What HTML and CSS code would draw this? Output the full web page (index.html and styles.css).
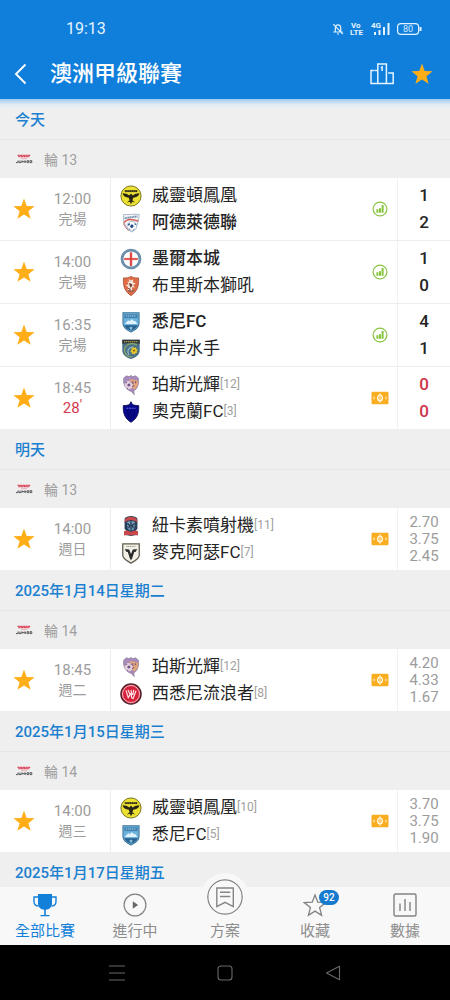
FILE: index.html
```html
<!DOCTYPE html>
<html lang="zh-Hant">
<head>
<meta charset="utf-8">
<meta name="viewport" content="width=device-width, initial-scale=1">
<title>澳洲甲級聯賽</title>
<link rel="stylesheet" href="styles.css">
</head>
<body>
<svg class="sprite" aria-hidden="true">
  <symbol id="star" viewBox="0 0 24 24"><path d="M12 1.600l2.700 7.400 7.900.3-6.200 4.900 2.200 7.600-6.600-4.400-6.600 4.400 2.200-7.600-6.200-4.900 7.900-.3z" fill="#ffae17"/></symbol>
  <symbol id="stats" viewBox="0 0 16 16"><circle cx="8" cy="8" r="6.900" fill="none" stroke="#8ac441" stroke-width="1.200"/><path d="M4.400 8.300h2v3.500h-2zM7 7.200h2v4.600H7zM9.600 4h2v7.800h-2z" fill="#85c43a"/></symbol>
  <symbol id="ticket" viewBox="0 0 18 14"><rect x=".5" y=".7" width="17" height="12.600" rx="1.300" fill="#f9ae22"/><ellipse cx="9" cy="7" rx="2.300" ry="3" fill="none" stroke="#fff" stroke-width="1.200"/><path d="M9 2.200v9.600" stroke="#fff3d4" stroke-width="1"/><path d="M3.200 5.800L2.600 7l.6 1.200zM14.800 5.800l.6 1.200-.6 1.200z" fill="#fff" stroke="#fff" stroke-width=".4"/></symbol>
  <symbol id="league" viewBox="0 0 18 10"><path d="M2.500 1.300h13M3.400 2.700h11" stroke="#dc4c61" stroke-width="1.300" stroke-dasharray="2.300 .3"/><path d="M6 4.700h6" stroke="#e3a0a8" stroke-width=".8"/><path d="M1 8.600h2V6.600M4 6.600v2h2v-2M7 8.700V6.800l1.200 1 1.100-1v1.900M10.500 6.700v2M12 8.600V6.700h1.700v1.900zM15 8.600V6.700h1.800v1.900z" fill="none" stroke="#4c4c50" stroke-width=".9"/></symbol>

  <symbol id="phoenix" viewBox="0 0 24 24"><circle cx="12" cy="12" r="11" fill="#ece033" stroke="#6f6a16" stroke-width="1"/><path d="M5.200 5.600h13.600v2.100H5.200z" fill="#2c2a17"/><path d="M6 6.600h12" stroke="#d8cc39" stroke-width=".7" stroke-dasharray="1 1"/><path d="M2.800 9c2.700.2 5.600.6 7.300 2.400L12 9.200l1.900 2.200C15.600 9.600 18.500 9.200 21.200 9c-.7 3.300-3.300 4.400-6.700 5l-1 2.500 3 2.700-3.200-1L12 21l-1.300-2.800-3.200 1 3-2.700-1-2.500C6.100 13.400 3.500 12.300 2.800 9z" fill="#292714"/></symbol>
  <symbol id="adelaide" viewBox="0 0 24 24"><path d="M4 2.600c5 .8 11-.9 17 .2-.7 6.300-.8 12-8 19.200C5.500 16.700 2.800 11 4 2.600z" fill="#f4f5f8" stroke="#8fa3bb" stroke-width=".8"/><path d="M5 6.800l14-2" stroke="#7890ad" stroke-width="2.200" stroke-dasharray="1.400 .5"/><path d="M4.200 12c2.500-4.300 9-4.600 15.600-2.200" fill="none" stroke="#d66057" stroke-width="1.600"/><circle cx="13" cy="15.500" r="5.200" fill="#fff" stroke="#87a1bd" stroke-width=".7"/><path d="M12 13.700l2.300.3.500 2.200-2 1.500-1.900-1.500zM8.500 14l1.500-2 1 1.200-1.200 2zM16 11.700l1.800 1.800-1.600.7zM14.500 19l2-.9-2.300 2.300zM9.200 17.800l1.800.8.400 1.600z" fill="#244987"/><path d="M3.800 12.500c1.500 3.500 3 5.700 5.700 7.800" fill="none" stroke="#c35c59"/></symbol>
  <symbol id="city" viewBox="0 0 24 24"><circle cx="12" cy="12" r="9.800" fill="#fff" stroke="#6387a6" stroke-width="3"/><circle cx="12" cy="12" r="9.900" fill="none" stroke="#a6bccd" stroke-width=".8" stroke-dasharray="1 1.300"/><path d="M5 10.600h5.200V5h3.600v5.600H19v2.800h-5.200V19h-3.600v-5.600H5z" fill="#f3c7c5"/><path d="M12 4.500v15M4.500 12h15" stroke="#dc3a35" stroke-width="1.900"/></symbol>
  <symbol id="roar" viewBox="0 0 24 24"><path d="M12 1.500c2.500 1.500 5 1.800 8.200 1.700.6 9-1.200 14.500-8.200 19.300C5 17.700 3.200 12.200 3.800 3.200 7 3.300 9.500 3 12 1.500z" fill="#de6d47" stroke="#a95137" stroke-width=".9"/><path d="M9.500 4l2 2 3-1-.7 3 3.400 1.300-2.800 1.500 1.600 3.200-2.600-.8-.4 4.800-2-3-3 2.400.9-4.400L6 11l3.500-.7L8 7l2.200.6z" fill="#f6e8df"/><path d="M10.500 9.300l2.700 1.300-1.600 2.700zM8.500 14.500l3 1" stroke="#6f3b32" stroke-width="1" fill="#6f3b32"/><path d="M8.500 17c2.400 1 4.700 1 7-.2" stroke="#5d5360" fill="none"/></symbol>
  <symbol id="sydney" viewBox="0 0 24 24"><path d="M3.200 2h17.600v11.500c0 4.700-4 7-8.800 9.500-4.800-2.500-8.800-4.800-8.800-9.500z" fill="#6db2dc" stroke="#3d7499" stroke-width="1.100"/><path d="M4.700 3.500h14.600v4.300H4.700z" fill="#4484b1"/><path d="M6.500 5.400h11" stroke="#abd1e8" stroke-dasharray="1.400 .8"/><path d="M5 14.200c1.800-1.400 2.600-3.400 4.500-4.200l1.300 1.300L13 8.700l2.200 2.600 1.200-.6 2.700 3.500z" fill="#e0f3fb"/><path d="M4.500 15.500h15c-1.500 3-4 4.500-7.500 6-3.500-1.500-6-3-7.500-6z" fill="#28618c"/><path d="M12 16.500l1 1.500h1.500l-1.200 1.200L12 21l-1.300-1.800L9.500 18H11z" fill="#8bc4e1"/></symbol>
  <symbol id="mariners" viewBox="0 0 24 24"><path d="M2.500 2h19v12c-.3 5-4.500 7.500-9.500 9-5-1.500-9.200-4-9.500-9z" fill="#49728a"/><path d="M2.500 1.800h19v4.400c-6-1-13-1-19 0z" fill="#30353a"/><path d="M4.500 4h15" stroke="#c1ad4d" stroke-width="1.200" stroke-dasharray="1.300 .9"/><path d="M18.500 7.500C11 4 4.800 8 5 14c.2 4.500 4.500 7 8.500 6.500" fill="none" stroke="#91a767" stroke-width="1.300"/><path d="M10 18.500c-3.500-4 0-9 4-8.500" fill="none" stroke="#94bcc9" stroke-width="1.200"/><path d="M14.700 9l1 1.800 2-.8-.1 2.100 2.100.6-1.600 1.500 1 1.900-2.100.1-.7 2.100-1.600-1.400-2 .8.200-2.200-1.900-.9 1.700-1.300-.5-2.100 2 .1z" fill="#f0cb25"/><circle cx="15.300" cy="13.700" r="1.200" fill="#7c6723"/></symbol>
  <symbol id="perth" viewBox="0 0 24 24"><path d="M4 4.500L7 2l3 1 2-1.500L14 3l3-1 3 2.500c.6 5 .2 9-3 12.500l-2 1.500.5 4-3-3.500C7.500 17.500 3 13.500 4 4.500z" fill="#a68bbb" stroke="#857194" stroke-width=".7"/><path d="M10.500 5.500L19.500 7v5.500L16 17l-5-3.500z" fill="#e1a477"/><circle cx="9.500" cy="12" r="4.500" fill="#e3cfdb"/><path d="M8.700 10.500l2.200.2.500 2-2 1-1.500-1.200zM5.500 10l1.300-1.700 1 1.400zM11.500 8l1.500 1.300-1.200.7zM7 15.300l1.500-.3.500 1.500z" fill="#705486"/><path d="M14 8v3M17 8v2M13.500 14l1.500-2" stroke="#7d567d" stroke-width="1.200"/></symbol>
  <symbol id="auckland" viewBox="0 0 24 24"><path d="M12 .8l1.400 2.700c2 1.300 4.300 1.400 7 1.500C20.800 13 19 19 12 23.200 5 19 3.200 13 3.600 5c2.700-.1 5-.2 7-1.500z" fill="#08088d" stroke="#05054d" stroke-width=".9"/><path d="M7 8h10" stroke="#6870cb" stroke-width="1.100" stroke-dasharray="2 .9"/><path d="M12 10.500V21M8.300 10.500l1.200 7.700M15.700 10.500l-1.200 7.700" stroke="#040460" stroke-width="1.200"/></symbol>
  <symbol id="jets" viewBox="0 0 24 24"><path d="M5 4c1-2 4-3 7-3s6 1 7 3v11l-2 2.500h2.300v4L12 23l-7.300-1.500v-4H7L5 15z" fill="#263f5b"/><path d="M5.200 6C6 .5 18 .5 18.800 6v2C16 5 8 5 5.200 8z" fill="#c8474b"/><path d="M7.500 8c3-2 6-2 9 0l-1 7-3.500 3-3.500-3z" fill="#7fa5c2"/><path d="M12 5.500v12M8 9l2.500 2.500-1 3M16 9l-2.500 2.500 1 3" fill="none" stroke="#263c56" stroke-width="1.500"/><path d="M4.500 17.500l3.500-.5 4 1.500 4-1.500 3.500.5v4.800l-4.500-.8-3 .8-3-.8-4.500.8z" fill="#cf4649"/></symbol>
  <symbol id="macarthur" viewBox="0 0 24 24"><path d="M3 2h18v12.500c0 4-4.500 6-9 8.500-4.500-2.500-9-4.500-9-8.500z" fill="#f2f0e7" stroke="#605d4e" stroke-width="1.400"/><path d="M7 4.800h10" stroke="#8d8870" stroke-width="1" stroke-dasharray="1.300 .6"/><path d="M5.300 7.700l4.700.5 2 4.800 2-4.800 4.700-.5-1.500 2.800-1.700.4-2.300 7.100L12 20l-1.200-2-2.300-7.100-1.700-.4z" fill="#292b29"/></symbol>
  <symbol id="wanderers" viewBox="0 0 24 24"><circle cx="12" cy="12" r="11" fill="#d7213b" stroke="#4b2029" stroke-width="1.500"/><circle cx="12" cy="12" r="9.300" fill="none" stroke="#f6dbe0" stroke-width=".9"/><path d="M6.500 8l2.500 8 3-5 .7 5 1.500 1 3.300-8.500M8.700 7.500l2 4.500M12 7.500l1 5.500M15 7.500L14 13" fill="none" stroke="#fbe5e8" stroke-width="1.300"/></symbol>
</svg>

<div class="app">
  <header class="header">
    <div class="status">
      <time class="clock">19:13</time>
      <svg class="status-icons" viewBox="0 0 90 16" role="img" aria-label="靜音, VoLTE, 4G, 電量 80">
        <g fill="none" stroke="#e3f3ff" stroke-width="1.200"><path d="M3.300 10.800V7.200a2.700 3.400 0 0 1 5.400 0v3.600M1.300 11h9.400M5 13h2M1.300 3.200l9.600 10"/><rect x="65.600" y="2.700" width="21" height="10.600" rx="3.300"/><path d="M88.500 6v4" stroke-width="2"/></g>
        <path d="M42 11h2v3h-2zM46.500 9h2v5h-2zM51 6h2v8h-2zM55.500 2h2v12h-2z" fill="#e3f3ff"/>
        <g class="status-text"><text x="19" y="7">Vo</text><text x="18" y="14">LTE</text><text x="39" y="7">4G</text></g>
        <text class="battery-text" x="71" y="11">80</text>
      </svg>
    </div>
    <div class="titlebar">
      <button class="icon-button back" aria-label="返回"><svg viewBox="0 0 14 22"><path d="M11.500 1.500L2 11l9.500 9.500" fill="none" stroke="#fff" stroke-width="1.900"/></svg></button>
      <h1>澳洲甲級聯賽</h1>
      <button class="icon-button podium" aria-label="排名"><svg viewBox="0 0 24 22"><path d="M7.800 20.500V1h8.600v19.500M7.800 7.600H5M4.500 7.600H1v12.900h22.200V10h-5M12.100 8V4l-1.200.8" fill="none" stroke="#e3f4ff" stroke-width="1.500"/></svg></button>
      <button class="icon-button favorite" aria-label="收藏聯賽"><svg viewBox="0 0 24 24"><use href="#star"/></svg></button>
    </div>
  </header>

  <main class="list">
    <section>
      <h2 class="date">今天</h2>
      <h3 class="round"><svg><use href="#league"/></svg>輪 13</h3>
      <ul class="matches">
        <li class="match">
          <button class="star" aria-label="收藏"><svg><use href="#star"/></svg></button>
          <div class="when"><span>12:00</span><span class="state">完場</span></div>
          <div class="teams"><div class="team"><svg><use href="#phoenix"/></svg><span>威靈頓鳳凰</span></div><div class="team winner"><svg><use href="#adelaide"/></svg><span>阿德萊德聯</span></div></div>
          <svg class="info stats"><use href="#stats"/></svg>
          <div class="score"><span>1</span><span>2</span></div>
        </li>
        <li class="match">
          <button class="star" aria-label="收藏"><svg><use href="#star"/></svg></button>
          <div class="when"><span>14:00</span><span class="state">完場</span></div>
          <div class="teams"><div class="team winner"><svg><use href="#city"/></svg><span>墨爾本城</span></div><div class="team"><svg><use href="#roar"/></svg><span>布里斯本獅吼</span></div></div>
          <svg class="info stats"><use href="#stats"/></svg>
          <div class="score"><span>1</span><span>0</span></div>
        </li>
        <li class="match">
          <button class="star" aria-label="收藏"><svg><use href="#star"/></svg></button>
          <div class="when"><span>16:35</span><span class="state">完場</span></div>
          <div class="teams"><div class="team winner"><svg><use href="#sydney"/></svg><span>悉尼FC</span></div><div class="team"><svg><use href="#mariners"/></svg><span>中岸水手</span></div></div>
          <svg class="info stats"><use href="#stats"/></svg>
          <div class="score"><span>4</span><span>1</span></div>
        </li>
        <li class="match live">
          <button class="star" aria-label="收藏"><svg><use href="#star"/></svg></button>
          <div class="when"><span>18:45</span><span class="minute">28<sup>'</sup></span></div>
          <div class="teams"><div class="team"><svg><use href="#perth"/></svg><span>珀斯光輝</span><small>[12]</small></div><div class="team"><svg><use href="#auckland"/></svg><span>奧克蘭FC</span><small>[3]</small></div></div>
          <svg class="info ticket"><use href="#ticket"/></svg>
          <div class="score"><span>0</span><span>0</span></div>
        </li>
      </ul>
    </section>
    <section>
      <h2 class="date">明天</h2>
      <h3 class="round"><svg><use href="#league"/></svg>輪 13</h3>
      <ul class="matches">
        <li class="match">
          <button class="star" aria-label="收藏"><svg><use href="#star"/></svg></button>
          <div class="when"><span>14:00</span><span class="state">週日</span></div>
          <div class="teams"><div class="team"><svg><use href="#jets"/></svg><span>紐卡素噴射機</span><small>[11]</small></div><div class="team"><svg><use href="#macarthur"/></svg><span>麥克阿瑟FC</span><small>[7]</small></div></div>
          <svg class="info ticket"><use href="#ticket"/></svg>
          <div class="odds"><span>2.70</span><span>3.75</span><span>2.45</span></div>
        </li>
      </ul>
    </section>
    <section>
      <h2 class="date">2025年1月14日星期二</h2>
      <h3 class="round"><svg><use href="#league"/></svg>輪 14</h3>
      <ul class="matches">
        <li class="match">
          <button class="star" aria-label="收藏"><svg><use href="#star"/></svg></button>
          <div class="when"><span>18:45</span><span class="state">週二</span></div>
          <div class="teams"><div class="team"><svg><use href="#perth"/></svg><span>珀斯光輝</span><small>[12]</small></div><div class="team"><svg><use href="#wanderers"/></svg><span>西悉尼流浪者</span><small>[8]</small></div></div>
          <svg class="info ticket"><use href="#ticket"/></svg>
          <div class="odds"><span>4.20</span><span>4.33</span><span>1.67</span></div>
        </li>
      </ul>
    </section>
    <section>
      <h2 class="date">2025年1月15日星期三</h2>
      <h3 class="round"><svg><use href="#league"/></svg>輪 14</h3>
      <ul class="matches">
        <li class="match">
          <button class="star" aria-label="收藏"><svg><use href="#star"/></svg></button>
          <div class="when"><span>14:00</span><span class="state">週三</span></div>
          <div class="teams"><div class="team"><svg><use href="#phoenix"/></svg><span>威靈頓鳳凰</span><small>[10]</small></div><div class="team"><svg><use href="#sydney"/></svg><span>悉尼FC</span><small>[5]</small></div></div>
          <svg class="info ticket"><use href="#ticket"/></svg>
          <div class="odds"><span>3.70</span><span>3.75</span><span>1.90</span></div>
        </li>
      </ul>
    </section>
    <section>
      <h2 class="date">2025年1月17日星期五</h2>
    </section>
  </main>

  <nav class="tabs" aria-label="主選單">
    <a class="tab active" href="#all"><svg viewBox="0 0 24 24"><path d="M5 1h14v9.500c0 3.700-3 6-6.200 6.300V22h3.700v1.300h-9V22h3.700v-5.200C8 16.500 5 14.200 5 10.500z" fill="#127fd9"/><path d="M5 4H1v4.500C1 11.500 3 13 5.500 13M19 4h4v4.500c0 3-2 4.500-4.500 4.500" fill="none" stroke="#127fd9" stroke-width="1.400"/></svg><span>全部比賽</span></a>
    <a class="tab" href="#live"><svg viewBox="0 0 24 24"><circle cx="12" cy="12" r="10.900" fill="none" stroke="#828282" stroke-width="1.200"/><path d="M9.800 8.300l5.300 3.700-5.300 3.700z" fill="#686868"/></svg><span>進行中</span></a>
    <a class="tab center" href="#plans"><svg viewBox="0 0 36 36"><circle cx="18" cy="18" r="17.200" fill="none" stroke="#858585" stroke-width="1.300"/><path d="M9.800 9h16.500v18.500L18 23.300l-8.200 4.200zM13 13.300h10.200M13 17.500h10.200" fill="none" stroke="#858585" stroke-width="1.400"/></svg><span>方案</span></a>
    <a class="tab" href="#favorites"><svg viewBox="0 0 24 24"><path d="M12 2l2.800 7.200 8 .4-6.200 5 2 7.800-6.600-4.300-6.600 4.300 2-7.800-6.200-5 8-.4z" fill="none" stroke="#828282" stroke-width="1.300"/></svg><span>收藏</span><b class="badge">92</b></a>
    <a class="tab" href="#data"><svg viewBox="0 0 24 24"><rect x="1" y="1" width="22" height="22" rx="1.500" fill="none" stroke="#828282" stroke-width="1.400"/><path d="M7 18v-7.500M12 18V6M17 18V9" stroke="#828282" stroke-width="1.400"/></svg><span>數據</span></a>
  </nav>

  <div class="system">
    <button aria-label="最近使用"><svg viewBox="0 0 18 18"><path d="M1 2h16M1 9h16M1 16h16" stroke="#686868" stroke-width="1.100"/></svg></button>
    <button aria-label="主畫面"><svg viewBox="0 0 18 18"><rect x="2" y="2" width="14" height="14" rx="3" fill="none" stroke="#686868" stroke-width="1.100"/></svg></button>
    <button aria-label="返回"><svg viewBox="0 0 18 18"><path d="M15.500 2.300v13.400L2.500 9z" fill="none" stroke="#686868" stroke-width="1.100" stroke-linejoin="round"/></svg></button>
  </div>
</div>
</body>
</html>
```
FILE: styles.css
```css
* { box-sizing: border-box; }

body {
  margin: 0;
  background: #efefef;
  color: #242424;
  font-family: Roboto, "Noto Sans CJK TC", sans-serif;
}

h1, h2, h3, ul { margin: 0; padding: 0; }
ul { list-style: none; }
a { color: inherit; text-decoration: none; }
svg { display: block; flex: none; }
button {
  display: grid;
  place-items: center;
  padding: 0;
  border: 0;
  background: none;
  cursor: pointer;
}

.sprite { position: absolute; width: 0; height: 0; }

.app {
  display: flex;
  flex-direction: column;
  height: 100vh;
}

/* Header */
.header { background: #107fdb; color: #fff; }
.status {
  display: flex;
  align-items: center;
  justify-content: space-between;
  height: 48px;
  padding: 10px 26px 0 66px;
}
.clock { color: #e3f3ff; font-size: 16px; line-height: 20px; }
.status-icons { width: 90px; height: 16px; margin-right: 2px; }
.status-text { fill: #e3f3ff; font-size: 8px; font-weight: 700; }
.battery-text { fill: #d5ecff; font-size: 9px; }
.titlebar {
  display: flex;
  align-items: center;
  height: 51px;
  padding: 0 16px 0 14px;
}
.titlebar h1 {
  flex: 1;
  margin-left: 22px;
  font-size: 22px;
  font-weight: 500;
  line-height: 30px;
}
.back svg { width: 14px; height: 22px; }
.podium svg { width: 24px; height: 22px; }
.favorite { margin-left: 16px; }
.favorite svg { width: 24px; height: 24px; }

/* Match list */
.list {
  flex: 1;
  min-height: 0;
  overflow-y: auto;
  scrollbar-width: none;
  background: linear-gradient(#9fcbf1, #e4ebf2 6px, #efefef 10px);
}
.date {
  height: 40px;
  padding: 10px 15px;
  color: #1b80d0;
  font-size: 15px;
  font-weight: 500;
  line-height: 22px;
}
.round {
  display: flex;
  align-items: center;
  gap: 11px;
  height: 39px;
  padding: 0 15px;
  border-top: 1px solid #e7e7e7;
  color: #a0a0a0;
  font-size: 14px;
  font-weight: 400;
}
.round svg { width: 18px; height: 10px; }
.matches { background: #fff; }
.match {
  display: grid;
  grid-template-columns: 48px 62px 1fr 34px 53px;
  align-items: center;
  min-height: 62px;
}
.match + .match { min-height: 63px; border-top: 1px solid #ededed; }
.match > * { min-width: 0; }
.star svg { width: 24px; height: 24px; }
.when {
  display: flex;
  flex-direction: column;
  align-items: center;
  padding-right: 13px;
  color: #9c9c9c;
  font-size: 15px;
  line-height: 20px;
}
.state { font-size: 14px; }
.minute { color: #d3394c; }
.minute sup { line-height: 0; font-size: 14px; vertical-align: 3px; }
.teams {
  align-self: stretch;
  display: flex;
  flex-direction: column;
  justify-content: center;
  padding-left: 9px;
  border-left: 1px solid #ededed;
}
.team {
  display: flex;
  align-items: center;
  height: 27px;
  font-size: 17px;
  line-height: 27px;
  white-space: nowrap;
}
.team svg { width: 22px; height: 22px; margin-right: 10px; }
.team small { color: #a0a0a0; font-size: 12px; }
.winner { font-weight: 500; }
.info { justify-self: center; }
.stats { width: 16px; height: 16px; }
.ticket { width: 18px; height: 14px; }
.score, .odds {
  align-self: stretch;
  display: flex;
  flex-direction: column;
  align-items: center;
  justify-content: center;
  border-left: 1px solid #f1f1f1;
}
.score { font-size: 17px; font-weight: 500; line-height: 27px; }
.live .score { color: #cf354a; }
.odds { color: #9c9c9c; font-size: 15px; line-height: 17px; }

/* Bottom tabs */
.tabs {
  position: relative;
  z-index: 1;
  display: grid;
  grid-template-columns: repeat(5, 1fr);
  grid-template-rows: 100%;
  flex: none;
  height: 58px;
  background: #f8f8f8;
}
.tab {
  position: relative;
  display: flex;
  flex-direction: column;
  align-items: center;
  justify-content: flex-end;
  gap: 4px;
  padding-bottom: 4px;
  color: #8d8d8d;
  font-size: 15px;
  line-height: 20px;
}
.tab svg { width: 24px; height: 24px; }
.tab.active { color: #127fd9; }
.tab.center svg {
  width: 48px;
  height: 48px;
  padding: 6px;
  border-radius: 50%;
  background: #f8f8f8;
}
.tab.center { gap: 0; }
.badge {
  position: absolute;
  top: 3px;
  left: 50%;
  min-width: 20px;
  margin-left: 4px;
  padding: 0 4px;
  border-radius: 8px;
  background: #1579ce;
  color: #fff;
  font-size: 10px;
  font-weight: 500;
  line-height: 15px;
  text-align: center;
}

/* System navigation */
.system {
  display: grid;
  grid-template-columns: repeat(3, 1fr);
  flex: none;
  height: 55px;
  padding: 0 14%;
  background: #000;
}
.system svg { width: 18px; height: 18px; }
```
